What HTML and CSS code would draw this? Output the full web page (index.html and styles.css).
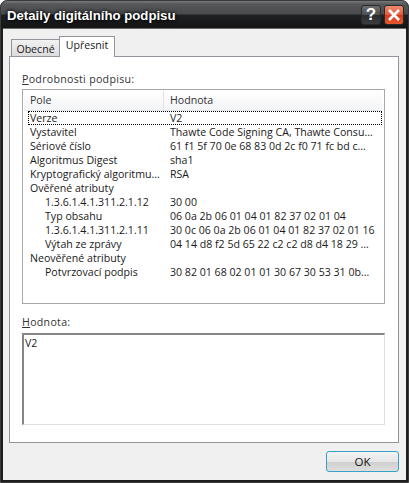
FILE: index.html
```html
<!DOCTYPE html>
<html>
<head>
    <meta charset="UTF-8">
    <title>Detaily digitálního podpisu</title>
    <link rel="stylesheet" href="styles.css">
</head>
<body>
    <div class="window">
        <div class="titlebar">
            <span class="title">Detaily digitálního podpisu</span>
            <div class="caption-buttons">
                <div class="caption-btn help">?</div>
                <div class="caption-btn close">
                    <svg width="16" height="14" viewBox="0 0 16 14">
                        <path d="M3 2 L13 12 M13 2 L3 12" stroke="#fff" stroke-width="2.6" fill="none"/>
                    </svg>
                </div>
            </div>
        </div>
        <div class="client">
            <div class="tabs">
                <div class="tab">Obecné</div>
                <div class="tab active">Upřesnit</div>
            </div>
            <div class="panel">
                <div class="label"><u>P</u>odrobnosti podpisu:</div>
                <div class="list">
                    <div class="list-head">
                        <div class="head-cell first">Pole</div>
                        <div class="head-cell">Hodnota</div>
                    </div>
                    <div class="row selected"><span class="c1">Verze</span><span class="c2">V2</span></div>
                    <div class="row"><span class="c1">Vystavitel</span><span class="c2">Thawte Code Signing CA, Thawte Consu…</span></div>
                    <div class="row"><span class="c1">Sériové číslo</span><span class="c2">61 f1 5f 70 0e 68 83 0d 2c f0 71 fc bd c…</span></div>
                    <div class="row"><span class="c1">Algoritmus Digest</span><span class="c2">sha1</span></div>
                    <div class="row"><span class="c1">Kryptografický algoritmu…</span><span class="c2">RSA</span></div>
                    <div class="row"><span class="c1">Ověřené atributy</span><span class="c2"></span></div>
                    <div class="row child"><span class="c1">1.3.6.1.4.1.311.2.1.12</span><span class="c2">30 00</span></div>
                    <div class="row child"><span class="c1">Typ obsahu</span><span class="c2">06 0a 2b 06 01 04 01 82 37 02 01 04</span></div>
                    <div class="row child"><span class="c1">1.3.6.1.4.1.311.2.1.11</span><span class="c2">30 0c 06 0a 2b 06 01 04 01 82 37 02 01 16</span></div>
                    <div class="row child"><span class="c1">Výtah ze zprávy</span><span class="c2">04 14 d8 f2 5d 65 22 c2 c2 d8 d4 18 29 …</span></div>
                    <div class="row"><span class="c1">Neověřené atributy</span><span class="c2"></span></div>
                    <div class="row child"><span class="c1">Potvrzovací podpis</span><span class="c2">30 82 01 68 02 01 01 30 67 30 53 31 0b…</span></div>
                </div>
                <div class="label value-label"><u>H</u>odnota:</div>
                <div class="value-box">V2</div>
            </div>
            <div class="footer">
                <div class="ok-button">OK</div>
            </div>
        </div>
    </div>
</body>
</html>
```

FILE: styles.css
```css
* {
    margin: 0;
    padding: 0;
    box-sizing: border-box;
}

body {
    width: 409px;
    height: 483px;
    overflow: hidden;
    background: #fff;
    font-family: 'Open Sans', 'Liberation Sans', sans-serif;
    font-size: 10.6px;
    color: #1a1a1a;
}

.window {
    width: 409px;
    height: 483px;
    display: flex;
    flex-direction: column;
    background: #1c1e20;
    border: 1px solid #3a3a3a;
    border-radius: 7px 7px 0 0;
    padding: 0 2px 2px 2px;
}

.titlebar {
    height: 27px;
    flex: none;
    display: flex;
    justify-content: space-between;
    background: linear-gradient(to bottom, #77797b 0, #56585a 3px, #4a4b4d 13px, #1f2123 14px, #141516 100%);
    margin: 0 -2px;
    padding: 0 4px 0 6px;
    border-radius: 6px 6px 0 0;
}

.title {
    font-family: 'Liberation Sans', sans-serif;
    font-weight: bold;
    font-size: 13.2px;
    line-height: 29px;
    color: #fff;
    text-shadow: 0 0 3px #000, 0 0 5px rgba(0, 0, 0, 0.8);
}

.caption-buttons {
    display: flex;
    gap: 3px;
    padding-top: 4px;
}

.caption-btn {
    width: 20px;
    height: 20px;
    border-radius: 3px;
    display: flex;
    align-items: center;
    justify-content: center;
    border: 1px solid #2a2a2a;
    color: #fff;
}

.help {
    background: linear-gradient(to bottom, #6c6e70 0, #4d4f51 50%, #2a2c2e 51%, #3a3c3e 100%);
    font-family: 'Liberation Sans', sans-serif;
    font-weight: bold;
    font-size: 17px;
}

.close {
    background: linear-gradient(to bottom, #ee8c70 0, #e2573a 50%, #d63a1c 51%, #e4582e 100%);
}

.client {
    flex: 1;
    background: #f0f0f0;
    padding: 8px 7px 0 6px;
    display: flex;
    flex-direction: column;
    border-top: 1px solid #6a6a6a;
}

.tabs {
    display: flex;
    align-items: flex-end;
    height: 20px;
    padding-left: 2px;
    position: relative;
    z-index: 1;
    margin-bottom: -1px;
}

.tab {
    height: 18px;
    width: 48px;
    text-align: center;
    line-height: 19px;
    background: linear-gradient(to bottom, #f2f2f2, #dcdcdc);
    border: 1px solid #94949c;
    border-right: none;
}

.tab.active {
    height: 21px;
    width: 56px;
    line-height: 17px;
    background: #fff;
    border: 1px solid #94949c;
    border-bottom: none;
}

.panel {
    height: 387px;
    background: #fff;
    border: 1px solid #94949c;
    padding: 14px 13px 0 12px;
    display: flex;
    flex-direction: column;
}

.label {
    height: 18px;
    line-height: 16px;
    letter-spacing: 0.3px;
    color: #333;
}

.list {
    height: 215px;
    border: 1px solid #a8a8a8;
    padding: 0 2px 0 1px;
}

.list-head {
    height: 21px;
    display: flex;
    background: linear-gradient(to bottom, #fff, #f4f5f7);
    border-bottom: 1px solid #e4e6ea;
}

.head-cell {
    line-height: 20px;
    padding-left: 6px;
    color: #333;
}

.head-cell.first {
    width: 140px;
    border-right: 1px solid #e0e2e6;
}

.row {
    height: 14px;
    line-height: 14px;
    display: flex;
    white-space: nowrap;
}

.row.selected {
    margin-left: 4px;
    outline: 1px dotted #000;
    outline-offset: -1px;
}

.c1 {
    width: 140px;
    flex: none;
    padding-left: 6px;
}

.c2 {
    padding-left: 6px;
}

.selected .c1 {
    width: 136px;
    padding-left: 2px;
}

.child .c1 {
    padding-left: 21px;
}

.value-label {
    margin-top: 9px;
    height: 20px;
    line-height: 18px;
}

.value-box {
    height: 92px;
    width: 363px;
    border: 1px solid #e0e0e0;
    border-top: 2px solid #86868a;
    border-left: 2px solid #86868a;
    padding: 1px 0 0 1px;
    line-height: 14px;
}

.footer {
    display: flex;
    justify-content: flex-end;
    padding-top: 8px;
}

.ok-button {
    width: 73px;
    height: 21px;
    text-align: center;
    line-height: 19px;
    border: 1px solid #3aa0c8;
    border-radius: 3px;
    background: linear-gradient(to bottom, #f4f4f4 0, #e6e6e6 50%, #cfcfcf 51%, #dedede 100%);
    color: #111;
    font-size: 11.5px;
}
```
